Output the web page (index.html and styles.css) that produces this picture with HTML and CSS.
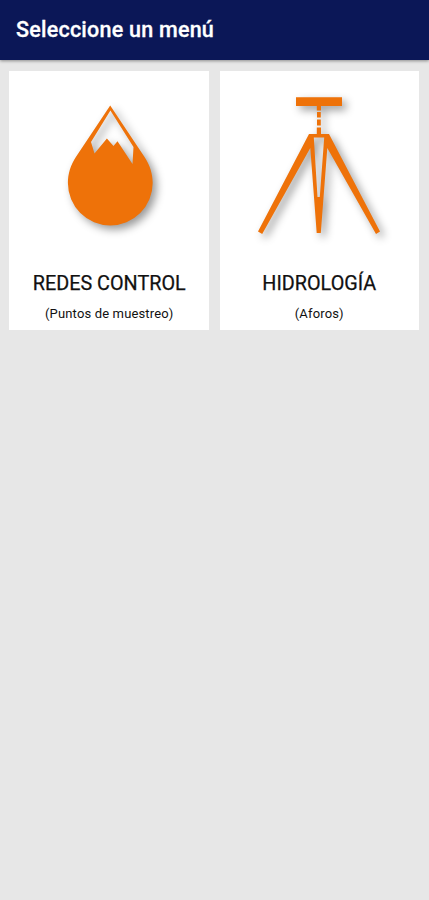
FILE: index.html
```
<!DOCTYPE html>
<html lang="es">
<head>
<meta charset="utf-8">
<title>Seleccione un menú</title>
<link rel="stylesheet" href="styles.css">
</head>
<body>
<header class="bar"><h1 class="bar-title">Seleccione un menú</h1></header>
<main class="menu">
  <a class="card">
    <svg class="icon" viewBox="8.8 71 200 190" aria-hidden="true">
      <path fill-rule="evenodd" d="M110 105.5L144 156.5C149.8 165 152.5 174 152.5 183A42.4 42.4 0 0 1 67.7 183C67.7 174 70.3 165 76 156.5ZM110.2 110.5L90.8 142L94.3 153.5L106.7 138.5L113.3 146L117.3 141.3L132.3 164L133.3 147Z"/>
    </svg>
    <h2 class="name">REDES CONTROL</h2>
    <p class="note">(Puntos de muestreo)</p>
  </a>
  <a class="card">
    <svg class="icon" viewBox="220 71 200 190" aria-hidden="true">
      <path fill-rule="evenodd" d="M296 97.3H342V106H296ZM316.8 106H321V110.5H316.8ZM317 112H320.8V117.5H317ZM317 119.5H320.8V125.5H317ZM316.8 127.5H321V134H316.8ZM309 134H329L380 231.5L376 234L327.3 148L320.8 233H316.7L310.3 148L262.2 234L258 231.5ZM313.8 137.5L317.5 197H319.8L324.2 137.5Z"/>
    </svg>
    <h2 class="name">HIDROLOGÍA</h2>
    <p class="note">(Aforos)</p>
  </a>
</main>
</body>
</html>
```
FILE: styles.css
```
* { box-sizing: border-box; }
body {
  margin: 0;
  min-height: 900px;
  background: #e7e7e7;
  font-family: Roboto, "Liberation Sans", sans-serif;
  color: #111;
}
.bar {
  display: flex;
  align-items: center;
  height: 60px;
  padding: 0 16px;
  background: #0b1757;
  box-shadow: 0 1px 3px rgba(0, 0, 0, .4);
}
.bar-title {
  margin: 0;
  font-size: 21.5px;
  font-weight: 500;
  line-height: 26px;
  letter-spacing: .23px;
  color: #fff;
  -webkit-text-stroke: .3px #fff;
}
.menu {
  display: grid;
  grid-template-columns: 200px 199px;
  gap: 10.5px;
  padding: 11px 9.25px;
}
.card {
  height: 259px;
  background: #fff;
  text-align: center;
}
.icon {
  display: block;
  width: 200px;
  height: 190px;
  fill: #ee7209;
  filter: drop-shadow(4px 4px 4px rgba(0, 0, 0, .4));
}
.name {
  margin: 11px 0 0;
  font-size: 19.8px;
  font-weight: 400;
  line-height: 24px;
  -webkit-text-stroke: .25px #111;
}
.note {
  margin: 10px 0 0;
  font-size: 13px;
  line-height: 16px;
  letter-spacing: .15px;
}
```
